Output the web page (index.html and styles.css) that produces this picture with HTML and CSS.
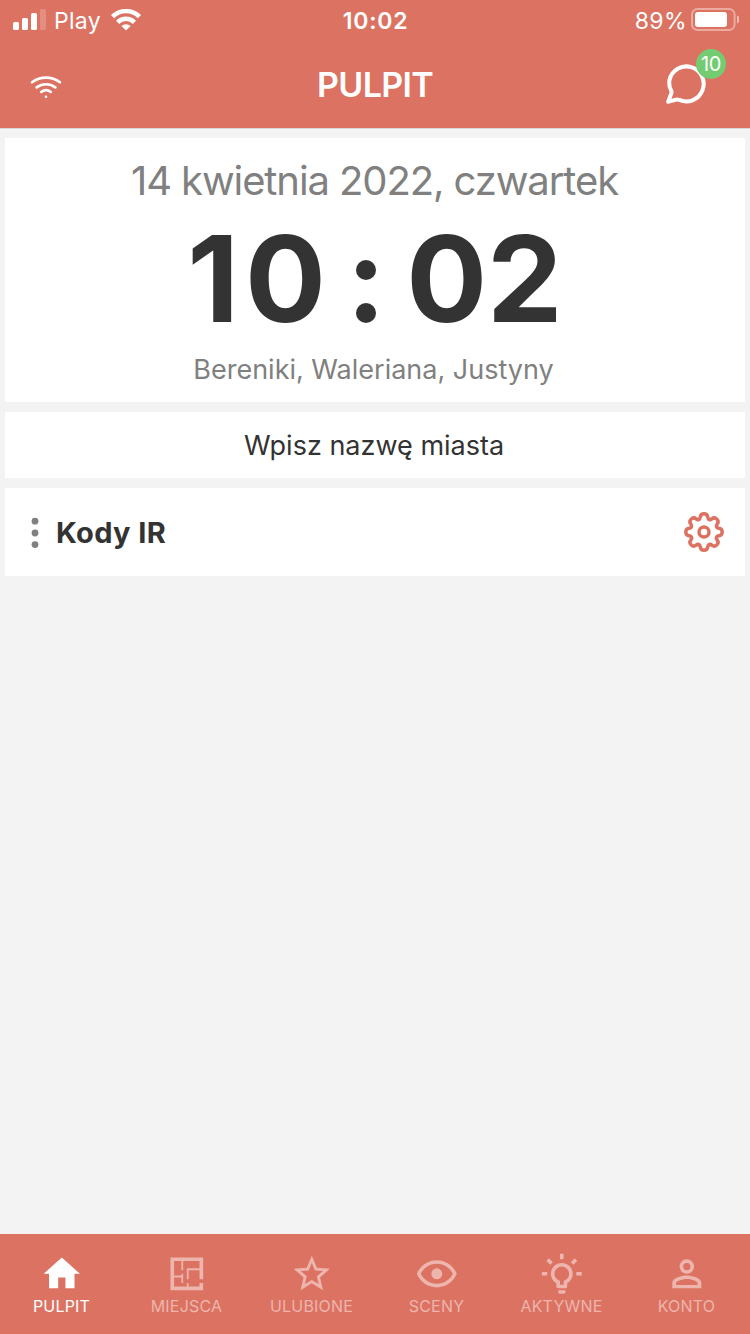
FILE: index.html
```html
<!DOCTYPE html>
<html lang="pl">
<head>
<meta charset="utf-8">
<title>Pulpit</title>
<link rel="stylesheet" href="styles.css">
</head>
<body>
<div class="app">
  <header class="header">
    <div class="status">
      <div class="status-side">
        <svg class="signal" width="34" height="22" viewBox="0 0 34 22" fill="#fff">
          <rect x="0" y="13" width="6" height="8" rx="1.6"/>
          <rect x="9" y="9" width="6" height="12" rx="1.6"/>
          <rect x="18" y="4" width="6" height="17" rx="1.6"/>
          <rect x="27" y="0" width="6" height="21" rx="1.6" opacity=".2"/>
        </svg>
        <span class="carrier">Play</span>
        <svg class="status-wifi" width="30" height="22" viewBox="0 0 30 22" fill="none" stroke="#fff" stroke-width="4.5">
          <path d="M1.6 7.6a19 19 0 0 1 26.8 0"/>
          <path d="M6.6 13.300a12 12 0 0 1 16.800 0"/>
          <path d="M15 21.600l-4.600-4.500a6.600 6.600 0 0 1 9.200 0z" fill="#fff" stroke="none"/>
        </svg>
      </div>
      <div class="status-time">10:02</div>
      <div class="status-side status-right">
        <span class="percent">89%</span>
        <svg class="battery" width="48" height="24" viewBox="0 0 48 24">
          <rect x="1" y="1" width="42.600" height="21" rx="5.500" fill="none" stroke="#fff" stroke-opacity=".4" stroke-width="2"/>
          <rect x="4" y="4" width="32" height="15" rx="3" fill="#fff"/>
          <path d="M46 7.500c1.900.6 2.700 2 2.700 4s-.8 3.400-2.700 4z" fill="#fff" fill-opacity=".5"/>
        </svg>
      </div>
    </div>
    <div class="nav">
      <svg class="nav-wifi" width="34" height="26" viewBox="0 0 34 26" fill="none" stroke="#fff" stroke-width="2.600" stroke-linecap="round">
        <path d="M3 8.300a23.500 23.500 0 0 1 28 0"/>
        <path d="M7.600 13.400a15.500 15.500 0 0 1 18.800 0"/>
        <path d="M12.200 18a8 8 0 0 1 9.600 0"/>
        <circle cx="17" cy="22.700" r="1.300" fill="#fff" stroke="none"/>
      </svg>
      <h1 class="title">PULPIT</h1>
      <div class="chat">
        <svg width="42" height="42" viewBox="0 0 42 42" fill="none" stroke="#fff" stroke-width="4" stroke-linejoin="round" stroke-linecap="round">
          <path d="M5.300 28C3.300 24 2.900 20 3.500 17A17.300 17.500 0 1 1 13.300 36.900C11.800 36.400 10.800 36.500 9.300 36.900L2.200 38.700L4.700 32C5.500 30.200 6 29.300 5.300 28Z"/>
        </svg>
        <span class="badge">10</span>
      </div>
    </div>
  </header>

  <main class="content">
    <section class="card clock">
      <div class="date">14 kwietnia 2022, czwartek</div>
      <div class="time"><span class="hours">10</span><span class="colon"><i></i><i></i></span><span>02</span></div>
      <div class="names">Bereniki, Waleriana, Justyny</div>
    </section>
    <section class="card city"><span>Wpisz nazwę miasta</span></section>
    <section class="card device">
      <svg width="10" height="32" viewBox="0 0 10 32" fill="#808080">
        <circle cx="5" cy="5.200" r="3.400"/><circle cx="5" cy="17" r="3.400"/><circle cx="5" cy="28.600" r="3.400"/>
      </svg>
      <h2 class="device-name">Kody IR</h2>
      <svg class="gear" width="42" height="42" viewBox="-21 -21 42 42" fill="none" stroke="#dc7262" stroke-width="3.500" stroke-linecap="round">
        <defs><path id="tooth" d="M-5.200-12.550C-3.900-13.100-3.900-13.700-3.750-14.800C-3.500-17-2.100-18.200 0-18.200S3.500-17 3.750-14.800C3.900-13.700 3.900-13.100 5.200-12.550"/></defs>
        <use href="#tooth"/>
        <use href="#tooth" transform="rotate(45)"/>
        <use href="#tooth" transform="rotate(90)"/>
        <use href="#tooth" transform="rotate(135)"/>
        <use href="#tooth" transform="rotate(180)"/>
        <use href="#tooth" transform="rotate(225)"/>
        <use href="#tooth" transform="rotate(270)"/>
        <use href="#tooth" transform="rotate(315)"/>
        <circle r="5"/>
      </svg>
    </section>
  </main>

  <nav class="tabs">
    <div class="tab active">
      <svg class="icon" viewBox="0 0 24 24"><path d="M10 20v-6h4v6h5v-8h3L12 3 2 12h3v8z"/></svg>
      <span>PULPIT</span>
    </div>
    <div class="tab">
      <svg class="icon" viewBox="0 0 24 24"><path d="M10 5V10H9V5H5V13H9V12H10V17H9V14H5V19H12V17H13V19H19V17H21V21H3V3H21V15H19V10H13V15H12V9H19V5H10Z"/></svg>
      <span>MIEJSCA</span>
    </div>
    <div class="tab">
      <svg class="icon" viewBox="0 0 24 24"><path d="M22 9.240l-7.190-.62L12 2 9.190 8.630 2 9.240l5.460 4.730L5.820 21 12 17.270 18.180 21l-1.630-7.030L22 9.240zM12 15.400l-3.760 2.270 1-4.280-3.320-2.880 4.380-.38L12 6.100l1.710 4.040 4.380.38-3.320 2.880 1 4.280L12 15.400z"/></svg>
      <span>ULUBIONE</span>
    </div>
    <div class="tab">
      <svg class="icon" viewBox="0 0 24 24"><path d="M12 9A3 3 0 0 1 15 12A3 3 0 0 1 12 15A3 3 0 0 1 9 12A3 3 0 0 1 12 9M12 4.500C17 4.500 21.270 7.610 23 12C21.270 16.390 17 19.500 12 19.500C7 19.500 2.730 16.390 1 12C2.730 7.610 7 4.500 12 4.500M3.180 12C4.830 15.360 8.240 17.500 12 17.500C15.760 17.500 19.170 15.360 20.820 12C19.170 8.640 15.760 6.500 12 6.500C8.240 6.500 4.830 8.640 3.180 12Z"/></svg>
      <span>SCENY</span>
    </div>
    <div class="tab">
      <svg class="icon" viewBox="0 0 24 24"><path d="M20 11H23V13H20V11M1 11H4V13H1V11M13 1V4H11V1H13M4.920 3.500L7.050 5.640L5.630 7.050L3.500 4.930L4.920 3.500M16.950 5.630L19.070 3.500L20.500 4.930L18.370 7.050L16.950 5.630M12 6A6 6 0 0 1 18 12C18 14.220 16.790 16.160 15 17.200V19A1 1 0 0 1 14 20H10A1 1 0 0 1 9 19V17.200C7.210 16.160 6 14.220 6 12A6 6 0 0 1 12 6M14 21V22A1 1 0 0 1 13 23H11A1 1 0 0 1 10 22V21H14M11 18H13V15.870C14.730 15.430 16 13.860 16 12A4 4 0 0 0 12 8A4 4 0 0 0 8 12C8 13.860 9.270 15.430 11 15.870V18Z"/></svg>
      <span>AKTYWNE</span>
    </div>
    <div class="tab">
      <svg class="icon" viewBox="0 0 24 24"><path d="M12 4A4 4 0 0 1 16 8A4 4 0 0 1 12 12A4 4 0 0 1 8 8A4 4 0 0 1 12 4M12 6A2 2 0 0 0 10 8A2 2 0 0 0 12 10A2 2 0 0 0 14 8A2 2 0 0 0 12 6M12 13C14.670 13 20 14.330 20 17V20H4V17C4 14.330 9.330 13 12 13M12 14.900C9.030 14.900 6.100 16.360 6.100 17V18.100H17.900V17C17.900 16.360 14.970 14.900 12 14.900Z"/></svg>
      <span>KONTO</span>
    </div>
  </nav>
</div>
</body>
</html>
```
FILE: styles.css
```css
* { box-sizing: border-box; }
body { margin: 0; font-family: Inter, "Liberation Sans", sans-serif; }
h1, h2 { margin: 0; }
svg { display: block; flex: none; }

.app { display: flex; flex-direction: column; width: 750px; height: 1334px; background: #f3f3f3; overflow: hidden; }

.header { height: 129px; background: #dc7262; border-bottom: 1px solid #dcd6d5; color: #fff; }
.status { display: flex; align-items: center; height: 40px; padding: 0 11px 0 13px; font-size: 23px; }
.status-side { display: flex; flex: 1; align-items: center; }
.status-right { justify-content: flex-end; }
.signal { margin-right: 7px; }
.carrier { line-height: 40px; padding-top: 2px; letter-spacing: .3px; }
.status-wifi { margin-left: 10px; }
.status-time { padding-top: 2px; padding-right: 1px; font-weight: 600; letter-spacing: .8px; }
.percent { padding-top: 2px; margin-right: 4px; letter-spacing: .4px; }

.nav { display: grid; grid-template-columns: 1fr auto 1fr; align-items: center; height: 88px; padding: 0 29px; }
.nav-wifi { margin-top: 6px; }
.title { font-size: 34px; font-weight: 600; letter-spacing: -.7px; }
.chat { position: relative; justify-self: end; margin-right: 13px; }
.badge { position: absolute; top: -14px; right: -18px; width: 30px; height: 30px; border-radius: 50%; background: #74cc72; font-size: 20px; line-height: 30px; text-align: center; letter-spacing: -.3px; }

.content { display: flex; flex: 1; flex-direction: column; gap: 10px; padding: 9px 5px 0; }
.card { background: #fff; color: #333; }
.clock { height: 264px; text-align: center; padding-top: 18px; }
.date { color: #808080; font-size: 40px; line-height: 50px; letter-spacing: -1.1px; padding-right: 1px; }
.time { display: flex; justify-content: center; align-items: center; height: 146px; font-size: 120px; font-weight: 700; line-height: 146px; }
.hours { letter-spacing: 6px; }
.colon { display: flex; flex-direction: column; gap: 23px; margin: 25px 29.75px 0 24.5px; }
.colon i { width: 20px; height: 20px; border-radius: 50%; background: #333; }
.names { color: #808080; font-size: 27px; line-height: 36px; padding-right: 3px; }
.city { display: flex; align-items: center; justify-content: center; height: 66px; padding-right: 2px; font-size: 27px; }
.device { display: flex; align-items: center; height: 88px; padding: 0 20px 0 25px; }
.device-name { flex: 1; margin-left: 16px; font-size: 29px; font-weight: 700; letter-spacing: .35px; }

.tabs { display: flex; height: 100px; padding-top: 18px; background: #dc7262; color: #edb5ad; }
.tab { display: flex; flex: 1; flex-direction: column; align-items: center; font-size: 16px; line-height: 20px; letter-spacing: .2px; }
.tab.active { color: #fff; }
.tab span { margin-right: 2px; }
.icon { width: 43.6px; height: 43.6px; margin-right: 1px; fill: currentColor; }
```
